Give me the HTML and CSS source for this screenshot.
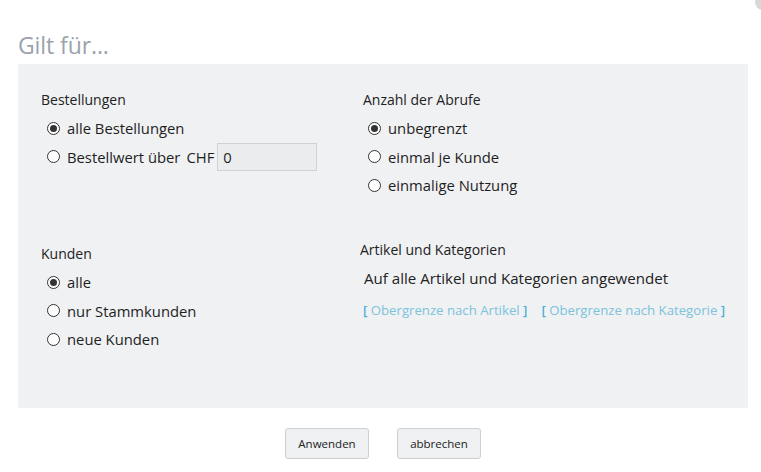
FILE: index.html
```html
<!DOCTYPE html>
<html lang="de">
<head>
<meta charset="utf-8">
<link rel="stylesheet" href="styles.css">
</head>
<body>
<div class="page">
  <span class="corner"></span>
  <h2 class="title">Gilt für...</h2>
  <div class="panel">
    <div class="grid">
      <section class="sec sec-orders">
        <div class="label">Bestellungen</div>
        <div class="opt"><span class="radio on"></span><span>alle Bestellungen</span></div>
        <div class="opt"><span class="radio"></span><span>Bestellwert über</span><span class="cur">CHF</span><span class="input">0</span></div>
      </section>
      <section class="sec sec-usage">
        <div class="label">Anzahl der Abrufe</div>
        <div class="opt"><span class="radio on"></span><span>unbegrenzt</span></div>
        <div class="opt"><span class="radio"></span><span>einmal je Kunde</span></div>
        <div class="opt"><span class="radio"></span><span>einmalige Nutzung</span></div>
      </section>
      <section class="sec sec-customers">
        <div class="label">Kunden</div>
        <div class="opt"><span class="radio on"></span><span>alle</span></div>
        <div class="opt"><span class="radio"></span><span>nur Stammkunden</span></div>
        <div class="opt"><span class="radio"></span><span>neue Kunden</span></div>
      </section>
      <section class="sec sec-items">
        <div class="label">Artikel und Kategorien</div>
        <div class="desc">Auf alle Artikel und Kategorien angewendet</div>
        <div class="links">
          <a class="link"><b>[</b> Obergrenze nach Artikel <b>]</b></a>
          <a class="link"><b>[</b> Obergrenze nach Kategorie <b>]</b></a>
        </div>
      </section>
    </div>
  </div>
  <div class="actions">
    <button class="btn">Anwenden</button>
    <button class="btn">abbrechen</button>
  </div>
</div>
</body>
</html>
```
FILE: styles.css
```css
* { box-sizing: border-box; }
html, body { margin: 0; padding: 0; background: #fff; }
body {
  font-family: "Open Sans", "Noto Sans", sans-serif;
  color: #222;
  width: 761px;
  height: 472px;
  overflow: hidden;
}
.page { position: relative; padding-top: 26px; }
.corner {
  position: absolute;
  top: -6px;
  right: -10px;
  width: 16px;
  height: 16px;
  border-radius: 50%;
  background: #d6d8da;
}
.title {
  margin: 0 0 0 18px;
  font-weight: 400;
  font-size: 23px;
  line-height: 38px;
  color: #9aa3ab;
  letter-spacing: -0.1px;
}
.panel {
  margin: 0 13px 0 18px;
  height: 344px;
  background: #f0f1f3;
  padding: 22px 0 0 23px;
}
.grid {
  display: grid;
  grid-template-columns: 321px 1fr;
  grid-template-rows: 152px auto;
}
.label {
  font-size: 14px;
  line-height: 28px;
  color: #222;
}
.opt {
  display: flex;
  align-items: center;
  height: 28.5px;
  padding-left: 6px;
  font-size: 14.8px;
  color: #1e1e1e;
}
.radio {
  width: 13px;
  height: 13px;
  border: 1px solid #333;
  border-radius: 50%;
  margin-right: 7px;
  background: #fff;
  display: flex;
  align-items: center;
  justify-content: center;
  flex: none;
}
.radio.on::after {
  content: "";
  width: 7px;
  height: 7px;
  border-radius: 50%;
  background: #333;
}
.cur { margin-left: 6px; margin-right: 3px; }
.input {
  width: 100px;
  height: 28px;
  border: 1px solid #cfd1d3;
  background: #ebeced;
  padding-left: 5px;
  line-height: 26px;
  font-size: 14.8px;
}
.sec-usage .label { margin-left: 1px; }
.sec-customers { padding-top: 2px; }
.sec-items { margin-left: -2px; }
.sec-items .label { line-height: 24px; }
.desc {
  font-size: 15.1px;
  line-height: 32px;
  padding-left: 4px;
}
.links {
  display: flex;
  gap: 14px;
  padding-left: 3px;
  margin-top: 1px;
  font-size: 13.2px;
  line-height: 30px;
}
.link { color: #7cc3dc; text-decoration: none; }
.link b { color: #4aafd8; font-weight: 600; }
.actions {
  display: flex;
  justify-content: center;
  gap: 28px;
  padding: 20px 0 0 5px;
}
.btn {
  width: 84px;
  height: 31px;
  font-family: inherit;
  font-size: 11.5px;
  color: #222;
  background: #eef0f2;
  border: 1px solid #cdd0d3;
  border-radius: 3px;
  padding: 0;
}
```
